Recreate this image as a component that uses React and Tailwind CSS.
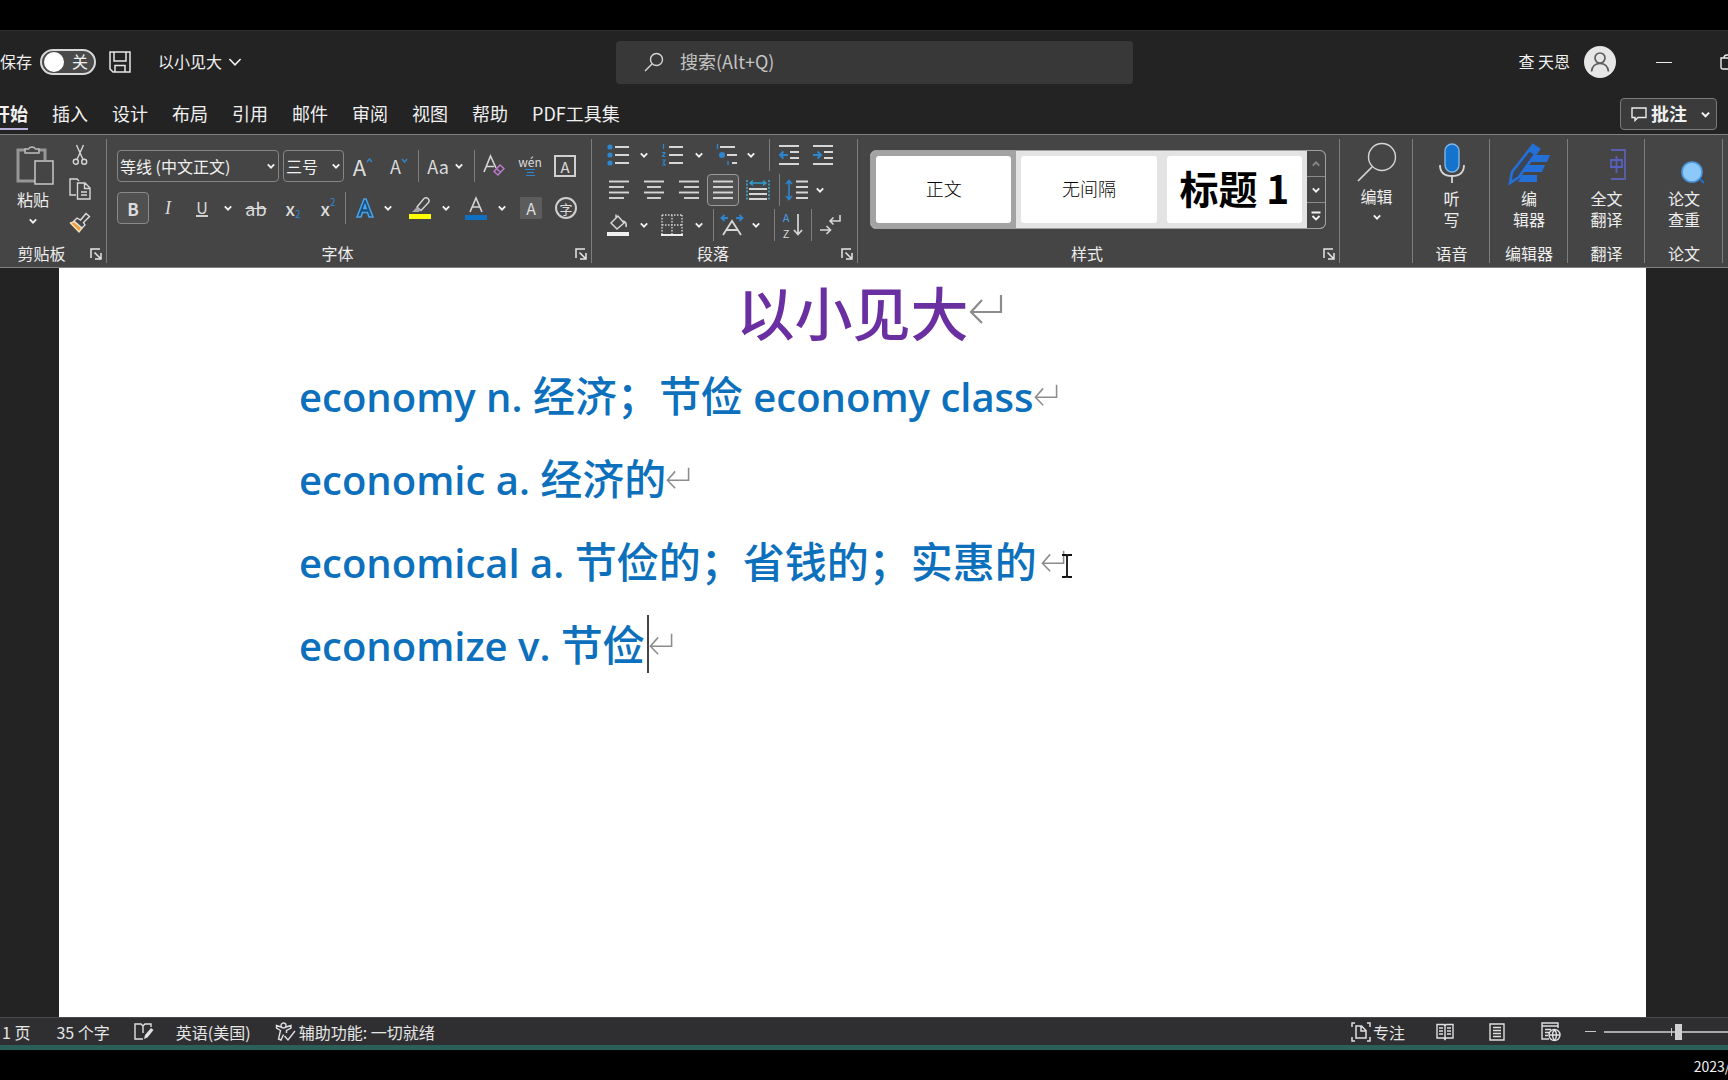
import React from "react";

const LIGHT = "#d6d6d6";
const BLUE = "#2f86d0";

function Svg({ w, h, label, children }) {
  return (
    <svg width={w} height={h} viewBox={`0 0 ${w} ${h}`} fill="none" stroke={LIGHT} strokeWidth="1.4" aria-hidden={label ? undefined : true} aria-label={label} className="shrink-0">
      {children}
    </svg>
  );
}

function Chevron({ size = 8, color = "#f2f2f2", thin = false }) {
  return (
    <svg width={size} height={size} viewBox="0 0 8 8" fill="none" stroke={color} strokeWidth={thin ? 0.9 : 1.8} className="shrink-0" aria-hidden="true">
      <path d="M0.8 2.3 L4 5.6 L7.2 2.3" />
    </svg>
  );
}

function Tool({ label, className = "w-[34px]", children }) {
  return (
    <button type="button" aria-label={label} className={`flex h-8 shrink-0 items-center justify-center leading-none text-[#dcdcdc] ${className}`}>
      {children}
    </button>
  );
}

function Drop({ label, className = "w-[18px]" }) {
  return (
    <Tool label={label} className={className}>
      <Chevron />
    </Tool>
  );
}

const Rule = ({ className = "" }) => <span className={`h-8 w-px shrink-0 bg-[#7d7d7d] ${className}`} />;

function Launcher() {
  return (
    <button type="button" aria-label="更多选项" className="absolute right-[5px] top-2">
      <Svg w={12} h={12}>
        <path d="M1 10 V1 H10 M4.5 4.5 L10 10 M11 5 V11 H5" stroke="#e6e6e6" strokeWidth="1.5" />
      </Svg>
    </button>
  );
}

function Group({ name, width, launcher, children }) {
  return (
    <section aria-label={name || "编辑"} className={`relative flex flex-col ${width}`}>
      <div className="h-[105px]">{children}</div>
      <div className={`relative flex h-[26px] items-center justify-center text-base leading-none text-[#ededed] ${launcher ? "pr-6" : ""}`}>
        <span>{name}</span>
        {launcher && <Launcher />}
      </div>
      <span className="absolute bottom-1 right-0 top-1 w-px bg-[#7d7d7d]" />
    </section>
  );
}

function Big({ icon, lines, drop }) {
  return (
    <button type="button" className="flex w-full flex-col items-center text-base leading-[21px] text-[#ededed]">
      {icon}
      {lines.map((l) => (
        <span key={l}>{l}</span>
      ))}
      {drop && <span className="pt-1.5"><Chevron /></span>}
    </button>
  );
}

function Lines({ rows }) {
  return (
    <Svg w={22} h={22}>
      {rows.map(([x1, x2], i) => (
        <path key={i} d={`M${x1} ${2.5 + i * 5.5} H${x2}`} strokeWidth="1.9" />
      ))}
    </Svg>
  );
}

function Mark({ big }) {
  return (
    <svg width={big ? 34 : 24} height={big ? 30 : 22} viewBox="0 0 34 30" fill="none" stroke="#8c8c8c" strokeWidth="2.2" preserveAspectRatio="none" className="shrink-0" aria-hidden="true">
      <path d="M32 1 V18 H2 M13 6 L2 18 L13 29" />
    </svg>
  );
}

function ClipboardGroup() {
  return (
    <Group name="剪贴板" width="w-[107px]" launcher>
      <div className="flex pt-2">
        <div className="flex w-[66px] justify-center">
          <button type="button" className="flex flex-col items-center text-base leading-6 text-[#ededed]">
            <Svg w={42} h={44}>
              <path d="M14 7 H6 V38 H23 M26 7 H33 V17" strokeWidth="3" stroke="#969696" />
              <path d="M13 10 V6 H16.500 A4 4 0 0 1 23.500 6 H27 V10 Z" stroke="#bdbdbd" />
              <rect x="23" y="18" width="18" height="23" stroke="#d0d0d0" fill="#454545" />
            </Svg>
            <span>粘贴</span>
            <span className="mt-1.5"><Chevron /></span>
          </button>
        </div>
        <div className="-mt-1 flex w-7 flex-col items-center gap-0.5">
          <Tool label="剪切">
            <Svg w={16} h={22}>
              <path d="M4.500 1 L11 15.500 M11.500 1 L5 15.500" />
              <circle cx="3.800" cy="17.800" r="2.500" />
              <circle cx="12.200" cy="17.800" r="2.500" />
            </Svg>
          </Tool>
          <Tool label="复制">
            <Svg w={22} h={22}>
              <path d="M7 17 H1 V1 H8 L10 3" />
              <path d="M8.500 5 H16 L21 10 V21 H8.500 Z M15.500 5 V10.500 H21 M12 14 H18 M12 17 H18" />
            </Svg>
          </Tool>
          <Tool label="格式刷">
            <Svg w={22} h={22}>
              <path d="M1.500 11 L10 20 L13 16 L5 9.500 Z" fill="#e9a23b" stroke="#f6e0b8" />
              <path d="M5 9 L8 6 L11.500 8 L17 1.500 L20.500 4.500 L14.500 10.500 L16 13 L13 16 Z" fill="#454545" stroke="#dedede" />
            </Svg>
          </Tool>
        </div>
      </div>
    </Group>
  );
}

function FontGroup() {
  return (
    <Group name="字体" width="w-[485px]" launcher>
      <div className="flex flex-col gap-2.5 pl-2.5 pt-[15px]">
        <div className="flex h-8 items-center">
          <div className="relative flex h-8 w-[162px] items-center">
            <select aria-label="字体" className="h-8 w-full appearance-none rounded border border-[#858585] bg-transparent pl-0.5 text-base leading-normal text-[#f0f0f0]">
              <option>等线 (中文正文)</option>
            </select>
            <span className="pointer-events-none absolute right-1"><Chevron /></span>
          </div>
          <div className="relative ml-1 flex h-8 w-[61px] items-center">
            <select aria-label="字号" className="h-8 w-full appearance-none rounded border border-[#858585] bg-transparent pl-0.5 text-base leading-normal text-[#f0f0f0]">
              <option>三号</option>
            </select>
            <span className="pointer-events-none absolute right-1"><Chevron /></span>
          </div>
          <Tool label="增大字号" className="ml-0.5 w-[34px]">
            <span className="text-[22px]">A</span>
            <span className="-mt-3"><Svg w={7} h={5}><path d="M1 4 L3.500 1 L6 4" stroke={BLUE} /></Svg></span>
          </Tool>
          <Tool label="减小字号" className="ml-0.5 w-[34px]">
            <span className="text-lg">A</span>
            <span className="-mt-3"><Svg w={7} h={5}><path d="M1 1 L3.500 4 L6 1" stroke={BLUE} /></Svg></span>
          </Tool>
          <Rule className="mx-0.5" />
          <Tool label="更改大小写" className="w-12 gap-1.5"><span className="text-lg">Aa</span><Chevron /></Tool>
          <Rule className="ml-[5px] mr-0.5" />
          <Tool label="清除格式">
            <Svg w={22} h={24}>
              <path d="M1 18 L7.500 2 L13 14 M3.500 12.500 H11" strokeWidth="1.600" />
              <path d="M11 17.500 L17 11 L21 14.500 L15 21 Z M13.500 14.800 L17.500 18.300" stroke="#c07ad0" />
            </Svg>
          </Tool>
          <Tool label="拼音指南" className="w-[38px] flex-col">
            <span className="text-xs leading-3">wén</span>
            <Svg w={12} h={9}><path d="M1 1.500 H11 M3 4.500 H10 M2 7.500 H11" stroke={BLUE} strokeWidth="1.200" /></Svg>
          </Tool>
          <Tool label="字符边框" className="w-8"><span className="flex h-[22px] w-[22px] items-center justify-center border-2 border-[#cfcfcf] text-[15px]">A</span></Tool>
        </div>
        <div className="flex h-8 items-center">
          <Tool label="加粗" className="w-8 rounded border border-[#8a8a8a] bg-[#505050]"><span className="text-[17px] font-bold">B</span></Tool>
          <Tool label="倾斜" className="ml-0.5 w-[34px]"><span className="font-['Liberation_Serif'] text-lg italic">I</span></Tool>
          <Tool label="下划线"><span className="border-b-2 border-[#cfcfcf] text-base leading-4">U</span></Tool>
          <Drop label="下划线样式" />
          <Tool label="删除线" className="w-[38px]"><span className="text-lg line-through">ab</span></Tool>
          <Tool label="下标" className="w-[36px]"><span className="text-lg font-medium">x</span><span className="pt-3 text-[10px] text-[#2f86d0]">2</span></Tool>
          <Tool label="上标"><span className="text-lg font-medium">x</span><span className="pb-3 text-[10px] text-[#2f86d0]">2</span></Tool>
          <Rule className="mr-0.5" />
          <Tool label="文本效果">
            <Svg w={20} h={22}>
              <path d="M2 20 L9 2 H11 L18 20 H14 L12.500 15.500 H7.500 L6 20 Z M8.800 11.500 H11.200 L10 8 Z" stroke="#49a3ea" fill="#1b4f7c" strokeWidth="1.500" />
            </Svg>
          </Tool>
          <Drop label="文本效果选项" className="w-3" />
          <Tool label="突出显示" className="ml-1.5 w-10">
            <Svg w={22} h={24}>
              <path d="M8 11 L15 2.500 Q17 1 19 2.500 Q21 4.500 19.500 6.500 L12 14.500 Z" />
              <path d="M8 11 L12 14.500 L9 16 H3 Z" fill="#a8a8a8" stroke="none" />
              <rect x="0" y="18" width="22" height="5" fill="#ffff00" stroke="none" />
            </Svg>
          </Tool>
          <Drop label="突出显示颜色" className="w-3" />
          <Tool label="字体颜色" className="ml-1 w-10">
            <Svg w={22} h={26}>
              <path d="M5 17 L11 3 L17 17 M7.500 12 H14.500" strokeWidth="1.600" />
              <rect x="0" y="20" width="22" height="5" fill="#0f6fc0" stroke="none" />
            </Svg>
          </Tool>
          <Drop label="字体颜色选项" className="w-3" />
          <Tool label="字符底纹" className="ml-1 w-[38px]"><span className="flex h-[22px] w-[22px] items-center justify-center bg-[#5c5c5c] text-base">A</span></Tool>
          <Tool label="带圈字符" className="w-8"><span className="flex h-[22px] w-[22px] items-center justify-center rounded-full border-2 border-[#cfcfcf] text-[13px]">字</span></Tool>
        </div>
      </div>
    </Group>
  );
}

function ParagraphGroup() {
  const dot = (cx, cy, r = 2.6) => <circle cx={cx} cy={cy} r={r} fill={BLUE} stroke="none" />;
  return (
    <Group name="段落" width="w-[266px]" launcher>
      <div className="flex flex-col gap-[3px] pl-[9px] pt-1">
        <div className="flex h-8 items-center">
          <Tool label="项目符号">
            <Svg w={22} h={22}>{dot(3, 3)}{dot(3, 11)}{dot(3, 19)}<path d="M8 3 H22 M8 11 H22 M8 19 H22" strokeWidth="1.900" /></Svg>
          </Tool>
          <Drop label="项目符号选项" />
          <Tool label="编号" className="w-[38px]">
            <Svg w={22} h={22}><path d="M2.500 0 V5 M1 8.500 H4 L1.500 12.500 H4.500 M1 16 H4 L2.500 18.500 L4 21 H1" stroke={BLUE} strokeWidth="1.200" /><path d="M8 3 H22 M8 11 H22 M8 19 H22" strokeWidth="1.900" /></Svg>
          </Tool>
          <Drop label="编号选项" className="w-4" />
          <Tool label="多级列表" className="w-[38px]">
            <Svg w={22} h={22}><path d="M2.500 0 V5" stroke={BLUE} />{dot(7, 11, 3)}<path d="M5 3 H20 M12 11 H22 M17 19 H22" strokeWidth="1.900" /><path d="M13 17 V21" stroke={BLUE} /></Svg>
          </Tool>
          <Drop label="多级列表选项" className="w-3" />
          <Rule className="ml-3 mr-0.5" />
          <Tool label="减少缩进">
            <Svg w={22} h={22}><path d="M1 2 H21 M12 8 H21 M12 14 H21 M1 20 H21" strokeWidth="1.800" /><path d="M10 11 H2 M5.500 7.500 L2 11 L5.500 14.500" stroke={BLUE} strokeWidth="2" /></Svg>
          </Tool>
          <Tool label="增加缩进">
            <Svg w={22} h={22}><path d="M1 2 H21 M12 8 H21 M12 14 H21 M1 20 H21" strokeWidth="1.800" /><path d="M1 11 H9 M5.500 7.500 L9 11 L5.500 14.500" stroke={BLUE} strokeWidth="2" /></Svg>
          </Tool>
        </div>
        <div className="flex h-8 items-center">
          <Tool label="左对齐" className="w-[35px]"><Lines rows={[[1, 21], [1, 16], [1, 21], [1, 16]]} /></Tool>
          <Tool label="居中" className="w-[35px]"><Lines rows={[[1, 21], [4, 18], [1, 21], [4, 18]]} /></Tool>
          <Tool label="右对齐" className="w-[35px]"><Lines rows={[[1, 21], [6, 21], [1, 21], [6, 21]]} /></Tool>
          <Tool label="两端对齐" className="ml-px w-8 rounded border border-[#9a9a9a] bg-[#505050]"><Lines rows={[[1, 21], [1, 21], [1, 21], [1, 21]]} /></Tool>
          <Tool label="分散对齐" className="ml-0.5 w-[34px]">
            <Svg w={24} h={22}><path d="M1 1 V21 M23 1 V21" stroke="#49b4dc" strokeDasharray="2 1.500" /><path d="M4 4 H20 M7 1.500 L4 4 L7 6.500 M17 1.500 L20 4 L17 6.500" stroke="#2f9fd0" /><path d="M3 10 H21 M3 15 H21 M3 20 H21" strokeWidth="1.900" /></Svg>
          </Tool>
          <Rule className="ml-1" />
          <Tool label="行距">
            <Svg w={24} h={22}><path d="M4 1 V21 M1 5 L4 1.500 L7 5 M1 17 L4 20.500 L7 17" stroke={BLUE} strokeWidth="1.600" /><path d="M11 2.500 H23 M11 8 H23 M11 13.500 H23 M11 19 H23" strokeWidth="1.900" /></Svg>
          </Tool>
          <Drop label="行距选项" className="w-3" />
        </div>
        <div className="flex h-8 items-center">
          <Tool label="底纹">
            <Svg w={22} h={24}><path d="M4 10 L11 3 L17 10 L10 16 Z M9 5 V1.500 M16 8 Q20 9 19 14" strokeWidth="1.500" /><rect x="0" y="19" width="22" height="4" fill="#f0f0f0" stroke="none" /></Svg>
          </Tool>
          <Drop label="底纹颜色" />
          <Tool label="边框" className="w-[38px]">
            <Svg w={22} h={22}><path d="M1 1 H21 M1 1 V20 M21 1 V20 M11 1 V20 M1 11 H21" strokeDasharray="1.500 1.500" /><path d="M0 21 H22" stroke="#fff" strokeWidth="1.800" /></Svg>
          </Tool>
          <Drop label="边框选项" className="w-4" />
          <Rule className="ml-1.5" />
          <Tool label="中文版式" className="w-9">
            <Svg w={24} h={22}><path d="M3 21 L12 7 L21 21 M6.500 16 H17.500" strokeWidth="1.800" /><path d="M8 4 H1.500 M4.500 1 L1.500 4 L4.500 7 M16 4 H22.500 M19.500 1 L22.500 4 L19.500 7" stroke={BLUE} strokeWidth="1.800" /></Svg>
          </Tool>
          <Drop label="中文版式选项" className="w-3" />
          <Rule className="ml-3 mr-0.5" />
          <Tool label="排序" className="w-8 gap-1">
            <span className="flex flex-col text-[11px] leading-[16px]">
              <span className="text-[#4a9fe6]">A</span>
              <span>Z</span>
            </span>
            <Svg w={10} h={22}><path d="M5 0 V20 M1 16 L5 20.500 L9 16" strokeWidth="1.700" /></Svg>
          </Tool>
          <Rule className="mx-0.5" />
          <Tool label="显示编辑标记" className="w-8">
            <Svg w={22} h={22}><path d="M21 1 V7 H11 M14.500 3.500 L11 7 L14.500 10.500 M1 16 H11 M7.500 12 L11.500 16 L7.500 20" strokeWidth="1.600" /></Svg>
          </Tool>
        </div>
      </div>
    </Group>
  );
}

function StylesGroup() {
  const card = "flex flex-1 items-center justify-center rounded-[3px] bg-white pb-1 text-black leading-none";
  const step = "flex flex-1 items-center justify-center border-b border-[#8a8a8a] last:border-b-0";
  return (
    <Group name="样式" width="min-w-0 flex-1" launcher>
      <div className="pl-3 pr-3.5 pt-[15px]">
        <div className="flex h-[79px] overflow-hidden rounded-md border border-[#a0a0a0] bg-[#e3e3e3]">
          <div className="flex flex-1 bg-[#a3a3a3] p-[5px]">
            <button type="button" className={`${card} text-lg font-light`}>正文</button>
          </div>
          <div className="flex flex-1 p-[5px]">
            <button type="button" className={`${card} text-lg font-light`}>无间隔</button>
          </div>
          <div className="flex flex-1 p-[5px]">
            <button type="button" className={`${card} whitespace-nowrap text-[39px] font-bold`}>标题 1</button>
          </div>
          <div className="flex w-[18px] flex-col bg-[#454545]">
            <button type="button" aria-label="上一行" className={step}><span className="rotate-180"><Chevron color="#8a8a8a" /></span></button>
            <button type="button" aria-label="下一行" className={step}><Chevron /></button>
            <button type="button" aria-label="更多样式" className={step}>
              <Svg w={10} h={10}><path d="M0.500 1.500 H9.500 M1.500 5 L5 8.500 L8.500 5" stroke="#f2f2f2" strokeWidth="1.800" /></Svg>
            </button>
          </div>
        </div>
      </div>
    </Group>
  );
}

function Ribbon() {
  return (
    <div className="flex h-[134px] shrink-0 overflow-hidden border-b border-t border-[#808080] bg-[#454545]">
      <ClipboardGroup />
      <FontGroup />
      <ParagraphGroup />
      <StylesGroup />
      <Group name="" width="w-[73px]">
        <div className="pt-[7px]">
          <Big
            lines={["编辑"]}
            drop
            icon={<Svg w={42} h={44}><circle cx="26" cy="15" r="13.500" /><path d="M16 25 L2 39" strokeWidth="1.700" /></Svg>}
          />
        </div>
      </Group>
      <Group name="语音" width="w-[77px]">
        <div className="pt-[7px]">
          <Big
            lines={["听", "写"]}
            icon={
              <Svg w={28} h={46}>
                <rect x="7" y="2" width="14" height="28" rx="7" fill="#1473cc" stroke="#7fb6e6" />
                <path d="M2 23 Q2 34 14 34 Q26 34 26 23 M14 34 V41" strokeWidth="1.800" />
              </Svg>
            }
          />
        </div>
      </Group>
      <Group name="编辑器" width="w-[78px]">
        <div className="pt-[7px]">
          <Big
            lines={["编", "辑器"]}
            icon={
              <Svg w={42} h={46}>
                <path d="M24 13 H42 L39 20 H21 Z M18 23 H37 L34 30 H15 Z M14 33 H29 V40 H10 Z" fill="#2470d8" stroke="none" />
                <path d="M25 3 L31 7 L11 35 L2 41 L4 30 Z" fill="#3a4658" stroke="#2470d8" strokeWidth="2.600" />
                <path d="M25 3 L31 7 L27 13 L20 9 Z" fill="#2470d8" stroke="none" />
              </Svg>
            }
          />
        </div>
      </Group>
      <Group name="翻译" width="w-[77px]">
        <div className="pt-[7px]">
          <Big
            lines={["全文", "翻译"]}
            icon={
              <Svg w={40} h={46}>
                <path d="M24 8 H38 V37 H24" stroke="#5a5fae" strokeWidth="1.800" />
                <path d="M24 18 H35 V25 H24 Z M29.500 14 V31" stroke="#5560c0" strokeWidth="1.800" />
              </Svg>
            }
          />
        </div>
      </Group>
      <Group name="论文" width="w-[78px]">
        <div className="pt-[7px]">
          <Big
            lines={["论文", "查重"]}
            icon={
              <Svg w={40} h={46}>
                <circle cx="28" cy="30" r="10" fill="#8cc8fa" stroke="#4a97e0" strokeWidth="1.600" />
                <path d="M36 37 L40 41" stroke="#1f6fc8" strokeWidth="2" />
              </Svg>
            }
          />
        </div>
      </Group>
      <div className="w-[5px]" />
    </div>
  );
}

function TitleBar() {
  return (
    <header className="grid h-16 shrink-0 grid-cols-[616px_1fr_595px] items-center overflow-hidden border-t border-[#2e2e2e] bg-[#232323] pb-px text-base leading-none text-[#f0f0f0]">
      <div className="flex items-center">
        <label className="flex items-center gap-2">
          <span className="pb-0.5">保存</span>
          <input type="checkbox" className="peer sr-only" />
          <span className="flex h-[26px] w-14 items-center justify-between rounded-full border-2 border-[#d8d8d8] bg-[#4a4a4a] pl-0.5 pr-1.5">
            <span className="h-5 w-5 rounded-full bg-white" />
            <span className="pb-0.5">关</span>
          </span>
        </label>
        <button type="button" aria-label="保存文件" className="ml-3">
          <Svg w={24} h={24}><path d="M2 2 H22 V22 H5 L2 19 Z M6 2 V11 H18 V2 M7 22 V15.500 H17 V22" stroke="#e6e6e6" strokeWidth="1.500" /></Svg>
        </button>
        <button type="button" className="ml-[26px] flex items-center gap-1.5">
          <span className="pb-0.5">以小见大</span>
          <Chevron size={14} thin />
        </button>
      </div>
      <label className="flex h-[43px] items-center gap-4 rounded bg-[#383838] pl-7">
        <Svg w={20} h={20}><circle cx="12.500" cy="7.500" r="6" /><path d="M8 12 L1 19" /></Svg>
        <input type="search" placeholder="搜索(Alt+Q)" aria-label="搜索" className="min-w-0 flex-1 bg-transparent pb-0.5 text-lg leading-none outline-none placeholder:text-[#c4c4c4]" />
      </label>
      <div className="flex items-center justify-end">
        <button type="button" className="flex items-center gap-3.5">
          <span className="pb-0.5">查 天恩</span>
          <span className="flex h-8 w-8 items-center justify-center rounded-full bg-[#e6e6e6]">
            <svg width="22" height="24" viewBox="0 0 22 24" fill="none" stroke="#5c5c5c" strokeWidth="1.700" aria-hidden="true">
              <circle cx="11" cy="8" r="5" />
              <path d="M2.500 21.500 Q3.500 13.500 11 13.500 Q18.500 13.500 19.500 21.500" />
            </svg>
          </span>
        </button>
        <button type="button" aria-label="最小化" className="ml-10 h-px w-4 bg-[#ececec]" />
        <button type="button" aria-label="还原" className="-mr-2 ml-12">
          <Svg w={16} h={16}><path d="M1 4 H12 V15 H3 Q1 15 1 13 Z M4 4 Q4 1 7 1 H15" stroke="#ececec" /></Svg>
        </button>
      </div>
    </header>
  );
}

const TABS = ["插入", "设计", "布局", "引用", "邮件", "审阅", "视图", "帮助", "PDF工具集"];

function TabRow() {
  return (
    <nav className="flex h-10 shrink-0 items-center justify-between overflow-hidden bg-[#232323] pr-[11px] text-lg leading-none text-[#f0f0f0]">
      <div className="-ml-2 flex gap-6 pb-0.5">
        <button type="button" className="-mb-2 border-b-2 border-[#b9b2dc] pb-1.5 font-bold">开始</button>
        {TABS.map((t) => (
          <button key={t} type="button">{t}</button>
        ))}
      </div>
      <button type="button" className="flex h-8 items-center rounded border border-[#7a7a7a] bg-[#3b3b3b] pl-2.5 pr-1.5 font-bold">
        <Svg w={16} h={16}><path d="M1 2 H15 V11.500 H7 L4 14.500 V11.500 H1 Z" stroke="#ececec" /></Svg>
        <span className="ml-1 pb-0.5">批注</span>
        <span className="ml-3.5"><Chevron size={9} /></span>
      </button>
    </nav>
  );
}

const Latin = ({ children }) => <span className="font-['Open_Sans'] text-[40px] font-semibold">{children}</span>;

function Line({ children, after }) {
  return (
    <p className="flex h-[83px] items-center whitespace-pre">
      <span>{children}</span>
      {after}
    </p>
  );
}

function Document() {
  return (
    <main className="flex flex-1 bg-[#232323] pl-[59px] pr-[82px]">
      <article className="flex-1 bg-white font-medium text-[#0d70bd]">
        <h1 className="flex h-[85px] items-center justify-center text-[58px] leading-none text-[#6a2fa0]">
          <span className="relative">
            以小见大
            <span className="absolute left-full top-3"><Mark big /></span>
          </span>
        </h1>
        <div className="pl-[240px] text-[42px] leading-none">
          <Line after={<Mark />}>
            <Latin>{"economy n. "}</Latin>经济；节俭<Latin>{" economy class"}</Latin>
          </Line>
          <Line after={<Mark />}>
            <Latin>{"economic a. "}</Latin>经济的
          </Line>
          <Line
            after={
              <span className="relative ml-1">
                <Mark />
                <svg width="12" height="24" viewBox="0 0 12 24" fill="none" stroke="#111" strokeWidth="1.800" className="absolute left-5 top-1" aria-hidden="true">
                  <path d="M1 1 H5 L6 2 L7 1 H11 M6 2 V22 M1 23 H5 L6 22 L7 23 H11" />
                </svg>
              </span>
            }
          >
            <Latin>{"economical a. "}</Latin>节俭的；省钱的；实惠的
          </Line>
          <Line
            after={
              <>
                <span className="ml-0.5 h-[58px] w-0.5 bg-[#444]" />
                <Mark />
              </>
            }
          >
            <Latin>{"economize v. "}</Latin>节俭
          </Line>
        </div>
      </article>
    </main>
  );
}

function StatusBar() {
  return (
    <footer className="flex h-7 shrink-0 items-center overflow-hidden border-t border-[#4a4a4a] bg-[#2f2f31] pl-0.5 text-base leading-none text-[#e6e6e6]">
      <span>1 页</span>
      <span className="ml-[26px]">35 个字</span>
      <button type="button" aria-label="校对" className="ml-6">
        <Svg w={20} h={18}><path d="M9 16 H1 V1 H7 L9 3 L11 1 H17 V4 M9 3 V10" stroke="#e0e0e0" /><path d="M10 16 L11 12 L17 5 L19.500 7 L13.500 14.500 Z" fill="#e0e0e0" stroke="none" /></Svg>
      </button>
      <button type="button" className="ml-[22px]">英语(美国)</button>
      <button type="button" className="ml-6 flex items-center gap-0.5">
        <Svg w={22} h={20}><circle cx="8.500" cy="3.500" r="2.500" /><path d="M6 5 L1.500 3.500 V6 L5.500 8.500 L3.500 17 L6 18 L8.500 12.500 M11 5 L16 3.500 V6 L11.500 8.500 V11 M9.500 14 L13 18 L20 9" stroke="#e0e0e0" /></Svg>
        <span>辅助功能: 一切就绪</span>
      </button>
      <span className="flex-1" />
      <button type="button" className="flex items-center gap-0.5">
        <Svg w={20} h={20}><path d="M5 4 H10.500 L15 8.500 V16 H5 Z M10 4 V9 H15 M1 5 V1 H4 M16 1 H19 V5 M1 15 V19 H4 M16 19 H19 V15" stroke="#e0e0e0" strokeWidth="1.500" /></Svg>
        <span>专注</span>
      </button>
      <button type="button" aria-label="阅读视图" className="ml-[31px]">
        <Svg w={18} h={18}><path d="M1 1.500 H8 L9 3 L10 1.500 H17 V15 H10 L9 16.500 L8 15 H1 Z M9 3 V16 M3 5 H7 M3 8 H7 M3 11 H7 M11 5 H15 M11 8 H15 M11 11 H15" stroke="#e0e0e0" /></Svg>
      </button>
      <button type="button" aria-label="页面视图" className="ml-[35px]">
        <Svg w={16} h={18}><path d="M1 1 H15 V17 H1 Z M4 4.500 H12 M4 7.500 H12 M4 10.500 H12 M4 13.500 H12" stroke="#e0e0e0" /></Svg>
      </button>
      <button type="button" aria-label="Web 版式视图" className="ml-9">
        <Svg w={20} h={20}><path d="M8 17 H1 V1 H17 V6 M1 4 H17 M4 7.500 H10 M4 10.500 H8 M4 13.500 H7" stroke="#e0e0e0" /><circle cx="13.500" cy="13" r="5.500" fill="#2f2f31" stroke="#e0e0e0" /><path d="M8 13 H19 M13.500 7.500 Q9.500 13 13.500 18.500 M13.500 7.500 Q17.500 13 13.500 18.500" stroke="#e0e0e0" /></Svg>
      </button>
      <button type="button" aria-label="缩小" className="ml-6 h-px w-[11px] bg-[#c8c8c8]" />
      <div className="relative -mr-2.5 ml-2 flex w-[134px] items-center">
        <input
          type="range"
          aria-label="缩放"
          defaultValue="56"
          className="h-0.5 w-full appearance-none bg-[#a8a8a8] [&::-webkit-slider-thumb]:h-4 [&::-webkit-slider-thumb]:w-[7px] [&::-webkit-slider-thumb]:appearance-none [&::-webkit-slider-thumb]:bg-[#d0d0d0]"
        />
        <span className="pointer-events-none absolute left-1/2 h-2 w-px bg-[#c8c8c8]" />
      </div>
    </footer>
  );
}

export default function App() {
  return (
    <div lang="zh-CN" className="flex min-h-screen flex-col overflow-hidden bg-black pt-[30px] font-['Noto_Sans_CJK_SC',sans-serif]">
      <TitleBar />
      <TabRow />
      <Ribbon />
      <Document />
      <StatusBar />
      <div className="h-[5px] shrink-0 bg-[#2b5f5a]" />
      <div className="flex h-[30px] shrink-0 items-center justify-end overflow-hidden text-sm leading-none text-[#f0f0f0]">
        <time className="-mr-2.5 whitespace-nowrap pt-0.5">2023/0</time>
      </div>
    </div>
  );
}
